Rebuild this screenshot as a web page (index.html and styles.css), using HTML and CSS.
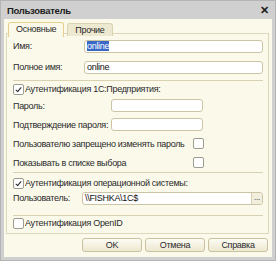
FILE: index.html
```html
<!DOCTYPE html>
<html lang="ru">
<head>
    <meta charset="UTF-8">
    <title>Пользователь</title>
    <link rel="stylesheet" href="styles.css">
</head>
<body>
    <div class="window">
        <div class="title-bar">
            <span class="title">Пользователь</span>
            <span class="close">&#x2715;</span>
        </div>
        <div class="client">
            <div class="tabs">
                <div class="tab active">Основные</div>
                <div class="tab">Прочие</div>
            </div>
            <div class="panel">
                <div class="row name-row">
                    <span class="label name-label">Имя:</span>
                    <div class="input wide"><span class="selected">online</span></div>
                </div>
                <div class="row name-row full-name">
                    <span class="label name-label">Полное имя:</span>
                    <div class="input wide">online</div>
                </div>
                <div class="sep sep-first"></div>
                <label class="check-row"><span class="box checked"></span>Аутентификация 1С:Предприятия:</label>
                <div class="row">
                    <span class="label pass-label">Пароль:</span>
                    <div class="input short"></div>
                </div>
                <div class="row">
                    <span class="label pass-label">Подтверждение пароля:</span>
                    <div class="input short"></div>
                </div>
                <div class="row">
                    <span class="label flag-label">Пользователю запрещено изменять пароль</span>
                    <span class="box"></span>
                </div>
                <div class="row">
                    <span class="label flag-label">Показывать в списке выбора</span>
                    <span class="box"></span>
                </div>
                <div class="sep sep-second"></div>
                <label class="check-row"><span class="box checked"></span>Аутентификация операционной системы:</label>
                <div class="row os-row">
                    <span class="label os-label">Пользователь:</span>
                    <div class="input wide with-btn">
                        <span class="value">\\FISHKA\1C$</span>
                        <span class="dots">...</span>
                    </div>
                </div>
                <div class="sep sep-third"></div>
                <label class="check-row"><span class="box"></span>Аутентификация OpenID</label>
            </div>
            <div class="buttons">
                <button class="btn">OK</button>
                <button class="btn">Отмена</button>
                <button class="btn">Справка</button>
            </div>
        </div>
    </div>
</body>
</html>
```

FILE: styles.css
```css
body {
    margin: 0;
    font-family: "Liberation Sans", Arial, sans-serif;
    font-size: 9px;
    letter-spacing: -0.3px;
    color: #2a2a2a;
    white-space: nowrap;
}
.window {
    width: 276px;
    height: 261px;
    box-sizing: border-box;
    background-color: #d0d0d0;
    border: 1px solid #b4b4b4;
    padding: 0 3px 3px 3px;
    display: flex;
    flex-direction: column;
}
.title-bar {
    height: 18px;
    display: flex;
    align-items: center;
    justify-content: space-between;
    padding: 0 3px 0 3px;
}
.title {
    font-weight: bold;
    font-size: 9.5px;
    color: #1e1e1e;
}
.close {
    font-weight: bold;
    font-size: 11px;
    letter-spacing: 0;
    color: #1e1e1e;
}
.client {
    flex: 1;
    background-color: #fbf9ea;
    padding: 3px 0 0 2px;
    display: flex;
    flex-direction: column;
}
.tabs {
    display: flex;
    gap: 3px;
    padding-left: 2px;
    height: 11px;
    position: relative;
    z-index: 1;
}
.tab {
    height: 11px;
    border: 1px solid #d9d3b0;
    border-bottom: none;
    border-radius: 3px 3px 0 0;
    background-color: #ede8d0;
    padding: 1px 7px 0 7px;
    margin-top: 1px;
}
.tab.active {
    background-color: #fbf9ea;
    border-color: #e8cf8e;
    margin-top: 0;
    height: 13px;
}
.panel {
    border: 1px solid #ddd7bc;
    width: 263px;
    height: 201px;
    box-sizing: border-box;
    padding: 2px 5px 0 6px;
}
.row {
    display: flex;
    align-items: center;
    height: 19px;
}
.name-row {
    height: 20px;
}
.full-name {
    margin-top: 1px;
}
.label {
    flex-shrink: 0;
}
.name-label {
    width: 71px;
}
.pass-label {
    width: 98px;
}
.flag-label {
    width: 180px;
}
.os-label {
    width: 69px;
}
.input {
    height: 13px;
    box-sizing: border-box;
    border: 1px solid #cbc5a6;
    border-radius: 3px;
    background-color: #fff;
    padding: 0 2px;
    color: #111;
    display: flex;
    align-items: center;
}
.wide {
    flex: 1;
}
.short {
    width: 92px;
}
.selected {
    background-color: #3968c6;
    color: #fff;
}
.with-btn {
    padding-right: 0;
}
.value {
    flex: 1;
}
.dots {
    width: 10px;
    height: 11px;
    border-left: 1px solid #d6d0b4;
    background-color: #f1eedd;
    font-size: 8px;
    line-height: 9px;
    text-align: center;
    border-radius: 0 2px 2px 0;
}
.sep {
    border-top: 1px solid #d8d1b2;
}
.sep-first {
    margin: 3px 0 1px 0;
}
.sep-second {
    margin: 0 0 3px 0;
}
.sep-third {
    margin: 9px 0 0 0;
}
.os-row {
    height: 16px;
}
.check-row {
    display: flex;
    align-items: center;
    height: 14px;
}
.box {
    width: 9px;
    height: 9px;
    border: 1px solid #9c9c90;
    border-radius: 2px;
    background-color: #fff;
    position: relative;
    flex-shrink: 0;
}
.check-row .box {
    margin-right: 1px;
}
.box.checked::after {
    content: "";
    position: absolute;
    left: 3px;
    top: 1px;
    width: 2px;
    height: 5px;
    border: solid #222;
    border-width: 0 1.5px 1.5px 0;
    transform: rotate(40deg);
}
.buttons {
    display: flex;
    justify-content: flex-end;
    gap: 3px;
    padding: 4px 4px 0 0;
}
.btn {
    width: 60px;
    height: 14px;
    font-family: "Liberation Sans", Arial, sans-serif;
    font-size: 9px;
    letter-spacing: -0.3px;
    color: #2a2a2a;
    background: linear-gradient(#fdfcf5, #ece7cf);
    border: 1px solid #c9c1a0;
    border-radius: 3px;
    padding: 0;
}
```
